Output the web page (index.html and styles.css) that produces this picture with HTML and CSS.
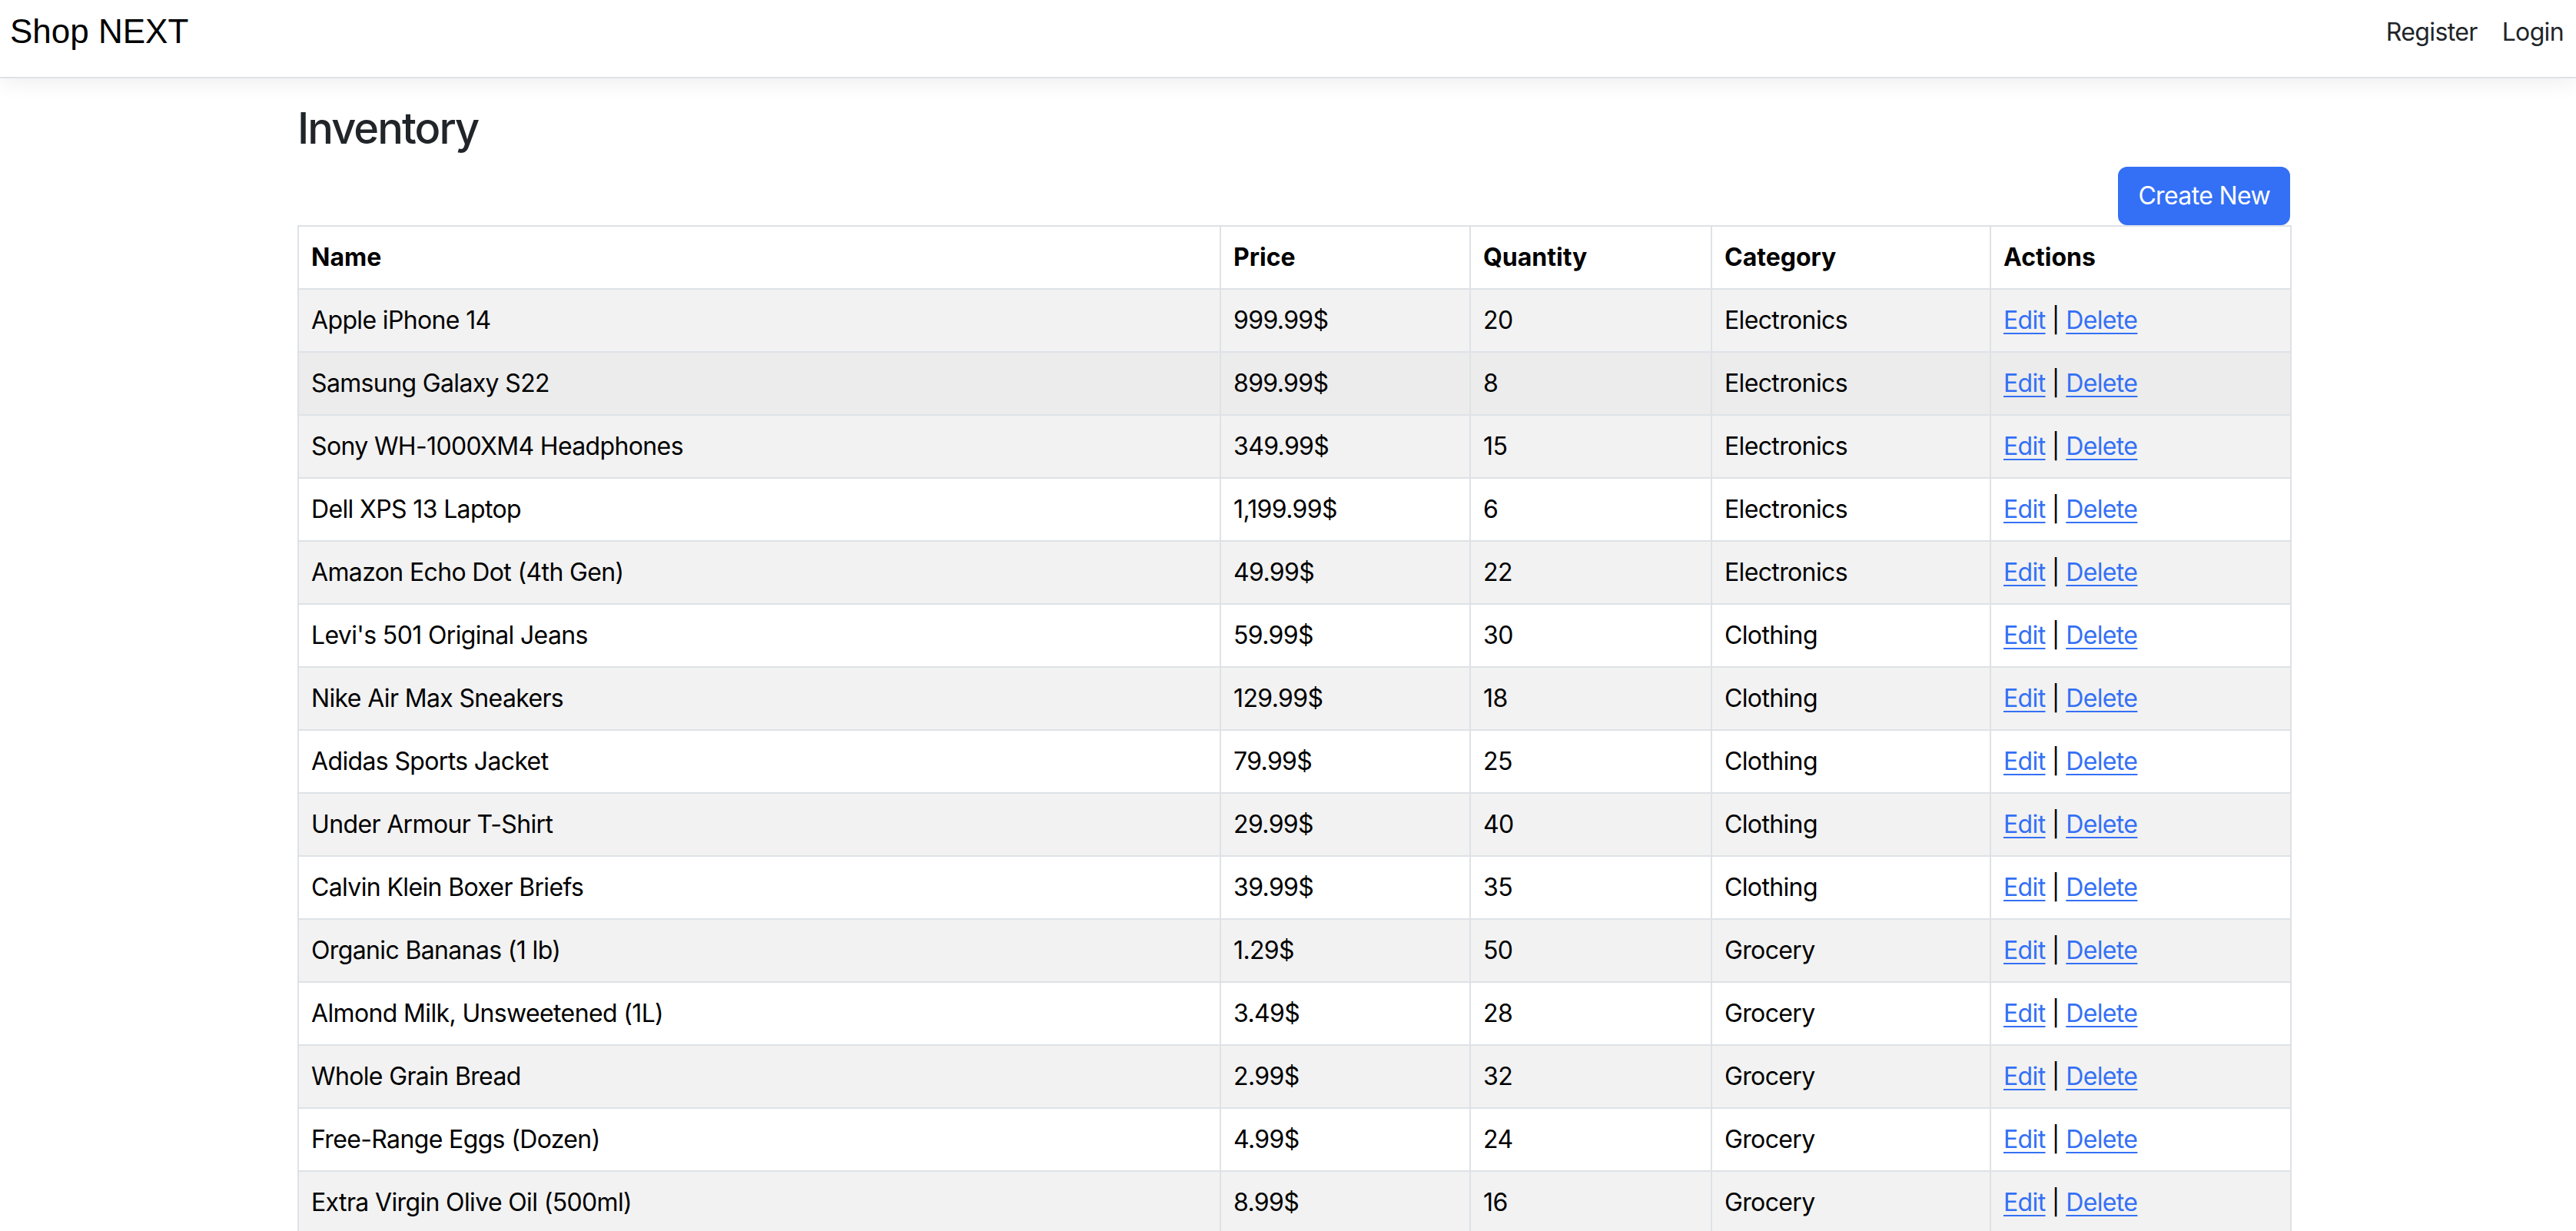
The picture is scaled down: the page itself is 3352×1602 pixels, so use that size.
FILE: index.html
```html
<!DOCTYPE html>
<html lang="en">
<head>
<meta charset="utf-8">
<title>Inventory - Shop NEXT</title>
<link rel="stylesheet" href="styles.css">
</head>
<body>
<nav class="navbar">
  <a class="brand" href="#">Shop NEXT</a>
  <div class="nav-links">
    <a class="nav-link" href="#">Register</a>
    <a class="nav-link" href="#">Login</a>
  </div>
</nav>
<main class="container">
  <h3 class="title">Inventory</h3>
  <div class="toolbar">
    <a class="btn-primary" href="#">Create New</a>
  </div>
  <table class="inv-table">
    <thead>
      <tr>
        <th class="c-name">Name</th>
        <th class="c-price">Price</th>
        <th class="c-qty">Quantity</th>
        <th class="c-cat">Category</th>
        <th class="c-act">Actions</th>
      </tr>
    </thead>
    <tbody>
      <tr><td>Apple iPhone 14</td><td>999.99$</td><td>20</td><td>Electronics</td><td><a href="#">Edit</a> | <a href="#">Delete</a></td></tr>
      <tr class="is-hover"><td>Samsung Galaxy S22</td><td>899.99$</td><td>8</td><td>Electronics</td><td><a href="#">Edit</a> | <a href="#">Delete</a></td></tr>
      <tr><td>Sony WH-1000XM4 Headphones</td><td>349.99$</td><td>15</td><td>Electronics</td><td><a href="#">Edit</a> | <a href="#">Delete</a></td></tr>
      <tr><td>Dell XPS 13 Laptop</td><td>1,199.99$</td><td>6</td><td>Electronics</td><td><a href="#">Edit</a> | <a href="#">Delete</a></td></tr>
      <tr><td>Amazon Echo Dot (4th Gen)</td><td>49.99$</td><td>22</td><td>Electronics</td><td><a href="#">Edit</a> | <a href="#">Delete</a></td></tr>
      <tr><td>Levi's 501 Original Jeans</td><td>59.99$</td><td>30</td><td>Clothing</td><td><a href="#">Edit</a> | <a href="#">Delete</a></td></tr>
      <tr><td>Nike Air Max Sneakers</td><td>129.99$</td><td>18</td><td>Clothing</td><td><a href="#">Edit</a> | <a href="#">Delete</a></td></tr>
      <tr><td>Adidas Sports Jacket</td><td>79.99$</td><td>25</td><td>Clothing</td><td><a href="#">Edit</a> | <a href="#">Delete</a></td></tr>
      <tr><td>Under Armour T-Shirt</td><td>29.99$</td><td>40</td><td>Clothing</td><td><a href="#">Edit</a> | <a href="#">Delete</a></td></tr>
      <tr><td>Calvin Klein Boxer Briefs</td><td>39.99$</td><td>35</td><td>Clothing</td><td><a href="#">Edit</a> | <a href="#">Delete</a></td></tr>
      <tr><td>Organic Bananas (1 lb)</td><td>1.29$</td><td>50</td><td>Grocery</td><td><a href="#">Edit</a> | <a href="#">Delete</a></td></tr>
      <tr><td>Almond Milk, Unsweetened (1L)</td><td>3.49$</td><td>28</td><td>Grocery</td><td><a href="#">Edit</a> | <a href="#">Delete</a></td></tr>
      <tr><td>Whole Grain Bread</td><td>2.99$</td><td>32</td><td>Grocery</td><td><a href="#">Edit</a> | <a href="#">Delete</a></td></tr>
      <tr><td>Free-Range Eggs (Dozen)</td><td>4.99$</td><td>24</td><td>Grocery</td><td><a href="#">Edit</a> | <a href="#">Delete</a></td></tr>
      <tr><td>Extra Virgin Olive Oil (500ml)</td><td>8.99$</td><td>16</td><td>Grocery</td><td><a href="#">Edit</a> | <a href="#">Delete</a></td></tr>
    </tbody>
  </table>
</main>
</body>
</html>
```
FILE: styles.css
```css
* { box-sizing: border-box; }

html, body {
  margin: 0;
  padding: 0;
  background: #fff;
}

body {
  font-family: "Inter", "Roboto", "Liberation Sans", sans-serif;
  font-size: 32px;
  line-height: 48px;
  color: #212529;
}

.navbar {
  display: flex;
  justify-content: space-between;
  align-items: flex-start;
  height: 102px;
  padding: 16px 0 0 13px;
  border-bottom: 2px solid #dee2e6;
  box-shadow: 0 8px 24px rgba(0, 0, 0, 0.06);
  background: #fff;
  margin-bottom: 32px;
}

.brand {
  font-family: "Liberation Sans", Arial, sans-serif;
  font-size: 44px;
  line-height: 50px;
  color: #000;
  text-decoration: none;
}

.nav-links {
  display: flex;
  margin-top: 2px;
}

.nav-link {
  padding: 0 16px;
  font-size: 32px;
  line-height: 48px;
  letter-spacing: -0.02em;
  color: #212529;
  text-decoration: none;
}

.container {
  width: 2593px;
  margin-left: 387px;
}

.title {
  margin: 0 0 16px;
  font-size: 56px;
  line-height: 1.2;
  font-weight: 500;
  letter-spacing: -0.035em;
  color: #212529;
}

.toolbar {
  display: flex;
  justify-content: flex-end;
}

.btn-primary {
  display: inline-block;
  padding: 12px 24px;
  font-size: 32px;
  line-height: 48px;
  letter-spacing: -0.02em;
  color: #fff;
  background: #3470f5;
  border: 2px solid #3470f5;
  border-radius: 12px;
  text-decoration: none;
}

.inv-table {
  width: 2593px;
  table-layout: fixed;
  border-collapse: collapse;
  border: 2px solid #dee2e6;
  color: #000;
}

.inv-table th,
.inv-table td {
  border: 2px solid #dee2e6;
  padding: 16px;
  text-align: left;
  vertical-align: top;
  white-space: nowrap;
}

.inv-table th { font-weight: 700; }
.inv-table td { letter-spacing: -0.02em; }

.c-name { width: 1200px; }
.c-price { width: 325px; }
.c-qty { width: 314px; }
.c-cat { width: 363px; }
.c-act { width: 391px; }

.inv-table tbody tr:nth-child(odd) td { background: #f2f2f2; }
.inv-table tbody tr.is-hover td { background: #ececec; }

.inv-table a {
  color: #3470f5;
  text-decoration: underline;
  text-decoration-thickness: 2px;
  text-underline-offset: 5px;
}
```
